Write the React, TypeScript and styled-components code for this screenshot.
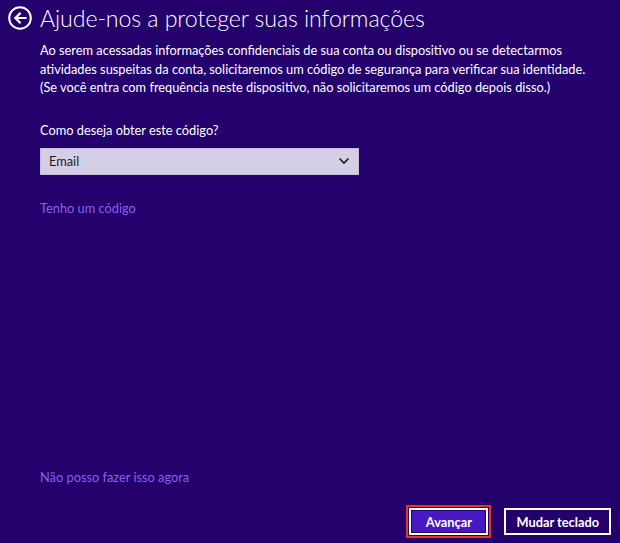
import { createGlobalStyle } from 'styled-components';
import styled from 'styled-components';

const GlobalStyle = createGlobalStyle`
  html, body {
    margin: 0;
    padding: 0;
    background: #24006c;
  }
  * {
    box-sizing: border-box;
  }
`;

const Page = styled.div`
  width: 620px;
  height: 543px;
  background: #24006c;
  color: #ffffff;
  font-family: Lato, 'Noto Sans', sans-serif;
  display: flex;
  flex-direction: column;
  padding: 3px 9px 8px 8px;
  overflow: hidden;
`;

const Header = styled.div`
  display: flex;
  align-items: center;
  gap: 8px;
  height: 30px;
`;

const BackButton = styled.button`
  width: 24px;
  height: 24px;
  padding: 0;
  border: none;
  background: transparent;
  display: flex;
  align-items: center;
  justify-content: center;
  cursor: pointer;
`;

const Title = styled.h1`
  margin: 0;
  font-size: 23.2px;
  font-weight: 300;
  line-height: 30px;
  letter-spacing: -0.1px;
  color: #ffffff;
  white-space: nowrap;
`;

const Content = styled.div`
  padding-left: 32px;
  flex: 1;
  display: flex;
  flex-direction: column;
`;

const Intro = styled.p`
  margin: 8px 0 0;
  font-size: 12.8px;
  line-height: 18.5px;
  color: #ffffff;
  white-space: nowrap;
`;

const Label = styled.div`
  margin-top: 24px;
  font-size: 12.8px;
  line-height: 18px;
`;

const Select = styled.div`
  margin-top: 9px;
  width: 319px;
  height: 27px;
  background: #d5cfe6;
  border: 1px solid #c5bddc;
  display: flex;
  align-items: center;
  justify-content: space-between;
  padding: 0 8px;
  color: #1c1c1c;
  font-size: 12.8px;
`;

const Link = styled.a<{ $top: number }>`
  margin-top: ${p => p.$top}px;
  font-size: 12.8px;
  line-height: 18px;
  color: #8c5ff2;
  text-decoration: none;
  cursor: pointer;
  align-self: flex-start;
`;

const Spacer = styled.div`
  flex: 1;
`;

const Footer = styled.div`
  display: flex;
  justify-content: flex-end;
  gap: 16px;
  margin-top: 22px;
`;

const Button = styled.button<{ $primary?: boolean }>`
  height: 27px;
  padding: 0 ${p => (p.$primary ? 14.5 : 10)}px;
  border: 2px solid #ffffff;
  background: ${p => (p.$primary ? '#4a18c2' : '#24006c')};
  color: #ffffff;
  font-family: Lato, 'Noto Sans', sans-serif;
  font-size: 12.8px;
  font-weight: 700;
  outline: ${p => (p.$primary ? '2px solid #e8371c' : 'none')};
  outline-offset: 1px;
  box-shadow: inset 0 0 0 1px #24006c;
  cursor: pointer;
`;

export default function App() {
  return (
    <>
      <GlobalStyle />
      <Page>
        <Header>
          <BackButton aria-label="Voltar">
            <svg width="24" height="24" viewBox="0 0 24 24">
              <circle cx="12" cy="12" r="10.8" fill="none" stroke="#ffffff" strokeWidth="2" />
              <path d="M17.5 12H7.5M11.8 7.6L7.4 12l4.4 4.4" fill="none" stroke="#ffffff" strokeWidth="2.2" strokeLinecap="square" />
            </svg>
          </BackButton>
          <Title>Ajude-nos a proteger suas informações</Title>
        </Header>
        <Content>
          <Intro>
            Ao serem acessadas informações confidenciais de sua conta ou dispositivo ou se detectarmos
            <br />
            atividades suspeitas da conta, solicitaremos um código de segurança para verificar sua identidade.
            <br />
            (Se você entra com frequência neste dispositivo, não solicitaremos um código depois disso.)
          </Intro>
          <Label>Como deseja obter este código?</Label>
          <Select>
            <span>Email</span>
            <svg width="12" height="8" viewBox="0 0 12 8">
              <path d="M1.5 1.5l4.5 4.5 4.5-4.5" fill="none" stroke="#1c1c1c" strokeWidth="1.6" />
            </svg>
          </Select>
          <Link $top={24}>Tenho um código</Link>
          <Spacer />
          <Link $top={0}>Não posso fazer isso agora</Link>
        </Content>
        <Footer>
          <Button $primary>Avançar</Button>
          <Button>Mudar teclado</Button>
        </Footer>
      </Page>
    </>
  );
}
